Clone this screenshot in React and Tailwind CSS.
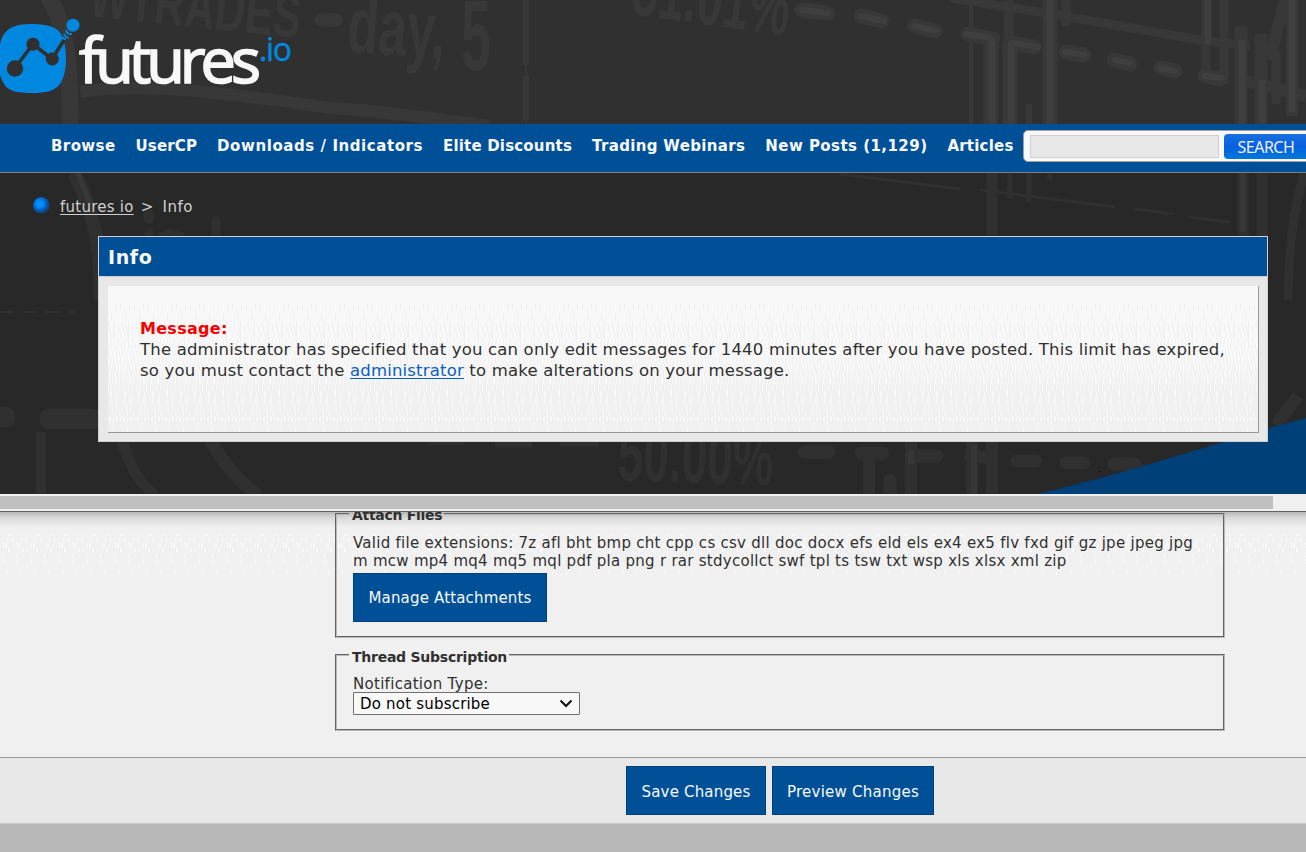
import React from 'react';

const navItems = [
  { label: 'Browse', spacing: 'tracking-[0.4px]' },
  { label: 'UserCP', spacing: 'tracking-[0.15px]' },
  { label: 'Downloads / Indicators', spacing: 'tracking-[0.57px]' },
  { label: 'Elite Discounts', spacing: 'tracking-[0.18px]' },
  { label: 'Trading Webinars', spacing: 'tracking-[0.34px]' },
  { label: 'New Posts (1,129)', spacing: 'tracking-[0.45px]' },
  { label: 'Articles', spacing: 'tracking-[0.2px]' },
];

// Grain rows: [y, height, x positions inside a 14px tile]
const panelDark = [
  [18, 6, [7, 12]],
  [28, 7, [3]],
  [35, 5, [0, 6]],
  [40, 6, [1, 4, 6, 10]],
  [46, 6, [2, 5, 6, 12]],
  [52, 5, [3, 6, 10]],
  [57, 6, [2, 6, 9, 13]],
  [64, 6, [0, 4, 8, 11]],
  [71, 7, [2, 5, 9, 12]],
  [78, 6, [1, 4, 6, 7, 10, 13]],
  [84, 7, [0, 3, 5, 8, 9, 12]],
];
const panelLight = [
  [91, 7, [1, 4, 7, 8, 11]],
  [98, 7, [0, 3, 6, 10]],
  [105, 6, [2, 3, 8]],
  [111, 7, [2, 7, 9]],
  [119, 6, [4, 8]],
  [125, 5, [5, 11]],
  [131, 4, [1, 2, 5, 8, 9, 12]],
  [136, 3, [4]],
  [141, 5, [5]],
];
const formLight = [
  [22, 2, [8, 11]],
  [25, 5, [7, 12]],
  [31, 5, [3, 5, 6]],
  [36, 4, [8, 9]],
  [41, 5, [2]],
  [47, 5, [3]],
  [59, 4, [6]],
];

const grainPath = (rows) =>
  rows.map(([y, h, xs]) => xs.map((x) => `M${x} ${y}h1v${h}h-1z`).join('')).join('');

const Grain = ({ id, rows, color, height }) => (
  <svg className="absolute top-0 left-0 -z-10" width="100%" height={height} aria-hidden="true">
    <defs>
      <pattern id={id} width="14" height={height} patternUnits="userSpaceOnUse">
        <path d={grainPath(rows)} fill={color} />
      </pattern>
    </defs>
    <rect width="100%" height={height} fill={`url(#${id})`} />
  </svg>
);

// Faded chart artwork behind the header and the info panel
const Backdrop = () => (
  <svg className="absolute inset-0 -z-10" width="1306" height="494" viewBox="0 0 1306 494" aria-hidden="true">
    <rect width="1306" height="124" fill="#303030" />
    <rect y="124" width="1306" height="370" fill="#282828" />
    <g fill="#383838" fontFamily="Liberation Sans Narrow, Liberation Sans, sans-serif" fontWeight="bold">
      <text transform="translate(88 16) rotate(6)" fontSize="62" textLength="212" lengthAdjust="spacingAndGlyphs">WTRADES</text>
      <text transform="translate(346 52) rotate(4)" fontSize="80" textLength="98" lengthAdjust="spacingAndGlyphs">day,</text>
      <text transform="translate(461 70)" fontSize="100" textLength="30" lengthAdjust="spacingAndGlyphs">5</text>
      <text transform="translate(630 14) rotate(8)" fontSize="82" textLength="158" lengthAdjust="spacingAndGlyphs">51.01%</text>
    </g>
    <g fill="none" stroke="#383838">
      <path d="M48 -4C64 22 70 50 70 124" strokeWidth="17" />
      <path d="M80 92C140 82 220 92 330 108C400 112 440 120 490 126" strokeWidth="12" />
      <path d="M526 0V65M526 76V120" strokeWidth="6" />
      <path d="M526 60V124" strokeWidth="2" />
      <path d="M321 20H336" strokeWidth="13" strokeLinecap="round" />
      <path d="M950 -2L1040 12L1200 40L1250 46" strokeWidth="9" />
      <path d="M971 0V124" strokeWidth="4" />
      <path d="M1009 0V40M1066 0V26M1206 0V80M1224 0V84" strokeWidth="9" />
      <path d="M1029 104V124" strokeWidth="6" />
      <path d="M991 38V124M1010 42V124M1050 0V124" strokeWidth="15" />
      <path d="M1241 26V124M1261 34V124" strokeWidth="13" />
      <path d="M1276 50V104" strokeWidth="9" />
      <path d="M1286 -5L1270 60M1292 0V116M1240 80L1306 96" strokeWidth="12" />
      <path d="M802 10L828 13M861 16L882 21M915 26L935 31M968 34L993 39M1011 43L1034 47M1066 52L1084 55M1114 60L1130 64M1161 68L1175 71M1205 76L1220 79" strokeWidth="15" strokeLinecap="round" />
    </g>
    <g fill="none" stroke="#3f3f3f">
      <path d="M802 10L828 13M861 16L884 21M914 26L936 31M966 34L990 38M1011 43L1038 47M1065 52L1084 55M1115 60L1130 63M1160 68L1175 71M1205 76L1222 78" strokeWidth="6" strokeLinecap="round" />
      <path d="M992 38V124M1011 44V124M1050 0V124M1208 0V44M1292 0V112M1242 40V124M1262 80V124" strokeWidth="7" />
    </g>
    <g fill="none" stroke="#303030">
      <path d="M74 173C94 210 101 250 101 300" strokeWidth="14" />
      <path d="M149 214V219" strokeWidth="10" strokeLinecap="round" />
      <path d="M149 233V236M216 221V236" strokeWidth="9" strokeLinecap="round" />
      <path d="M158 236L170 232L184 236" strokeWidth="6" />
      <path d="M0 312H75" strokeWidth="2" strokeDasharray="14 9" />
      <path d="M-5 417H5M50 419H92" strokeWidth="21" strokeLinecap="round" />
      <path d="M41 432V494" strokeWidth="10" />
      <path d="M122 441C130 465 138 482 155 496" strokeWidth="11" />
      <path d="M210 440C226 467 238 480 258 496" strokeWidth="13" />
      <path d="M840 174L960 189M980 190L1115 207M1135 209L1173 214M1188 217L1230 222" strokeWidth="3" />
      <path d="M992 173V236M1243 173V236M1262 173V236" strokeWidth="11" />
      <path d="M1010 173V198M1029 173V202M1050 173V180" strokeWidth="5" />
      <path d="M1304 173C1298 200 1290 215 1288 300" strokeWidth="9" />
      <path d="M430 441H464M495 444H532M560 443H598" strokeWidth="7" />
      <path d="M804 452H829M861 453H883M915 456H937M970 457H990M1017 461H1036M1066 463H1084M1114 464H1135" strokeWidth="13" strokeLinecap="round" />
      <path d="M869 458V494M911 442V494M972 442V494M992 442V494" strokeWidth="12" />
      <path d="M890 480V496" strokeWidth="13" strokeLinecap="round" />
      <path d="M1276 425L1298 396" strokeWidth="12" />
      <path d="M974 446V494M911 450V464" stroke="#363636" strokeWidth="6" />
      <path d="M78 173L90 204M1243 173V232" stroke="#383838" strokeWidth="5" />
    </g>
    <text transform="translate(617 480) rotate(2)" fontSize="76" fill="#303030" fontWeight="bold" fontFamily="Liberation Sans Narrow, Liberation Sans, sans-serif" textLength="156" lengthAdjust="spacingAndGlyphs">50.00%</text>
    <path d="M1037 494C1130 473 1210 444 1306 418V494Z" fill="#004078" />
    <rect x="1099" y="471" width="1" height="1" fill="#000" />
  </svg>
);

const Logo = () => (
  <svg width="300" height="124" viewBox="0 0 300 124" role="img" aria-label="futures.io">
    <path d="M31 24C52 24 59 29 62 36C65 43 66 50 66 59C66 67 65 76 60 84C55 91 46 93 32 93C17 93 8 91 4 84C-1 76 -1 67 -1 59C-1 48 0 40 4 34C9 27 17 24 31 24Z" fill="#0088e0" />
    <path d="M15 68L33 44L52 59L66 37" fill="none" stroke="#303030" strokeWidth="3.6" />
    <circle cx="15" cy="68.5" r="8.2" fill="#303030" />
    <circle cx="33" cy="44.2" r="6.5" fill="#303030" />
    <circle cx="52.3" cy="59" r="6.5" fill="#303030" />
    <circle cx="73" cy="25.2" r="6.5" fill="#0088e0" />
    <path d="M66 30Q67 35 72 34M64 33.5Q65 38 69 37.5M62.5 37Q63.5 39 66 39.5" fill="none" stroke="#0088e0" strokeWidth="1.8" />
    <text x="79" y="83" fontSize="63" fill="#f8f8f8" stroke="#f8f8f8" strokeWidth="1.7" fontFamily="Open Sans, Noto Sans, sans-serif" textLength="182" lengthAdjust="spacing">futures</text>
    <text x="259" y="61" fontSize="32" fill="#0088e0" stroke="#0088e0" strokeWidth="0.4" fontFamily="Open Sans, Noto Sans, sans-serif" textLength="33" lengthAdjust="spacing">.io</text>
  </svg>
);

const BlueButton = ({ children, className }) => (
  <button type="button" className={`h-[49px] border border-[#004078] bg-[#005098] text-[15px] text-[#f8f8f8] whitespace-nowrap ${className}`}>
    {children}
  </button>
);

const TopWindow = () => (
  <div className="relative isolate h-[494px] overflow-hidden">
    <Backdrop />
    <header className="h-[124px]">
      <Logo />
    </header>

    <nav className="flex h-[49px] w-[1340px] border-b border-[#808080] bg-[#005098] pl-[51px]">
      <ul className="flex gap-5 pt-[12px] text-[15px] leading-[21px] font-bold whitespace-nowrap text-[#f8f8f8]">
        {navItems.map(({ label, spacing }) => (
          <li key={label} className={spacing}>{label}</li>
        ))}
      </ul>
      <div className="mt-[6px] ml-[9px] flex h-[32px] w-[300px] shrink-0 items-center rounded-[5px] border border-[#a0a0a0] bg-[#f8f8f8] pl-[6px]">
        <div className="h-[23px] w-[189px] border border-[#d0d0d0] bg-[#e8e8e8]" />
        <button type="button" className="ml-[5px] h-[25px] w-[90px] rounded-[4px] bg-linear-to-b from-[#1870e0] via-[#0860e0] to-[#0078d8] pt-px pl-[14px] text-left font-['Noto_Sans',sans-serif] text-[16px] leading-[25px] tracking-[-0.5px] text-[#f0f0f0]">
          SEARCH
        </button>
      </div>
    </nav>

    <div className="flex h-[63px] items-start pt-[23px] text-[15px] leading-[23px] tracking-[0.25px] text-[#d0d0d0]">
      <span className="mt-px ml-[33px] h-[17px] w-[17px] rounded-full bg-radial-[at_40%_40%] from-[#0090ff] from-20% via-[#0060c0] via-45% to-[#282828] to-80%" />
      <a href="#" className="ml-[10px] underline underline-offset-2">futures io</a>
      <span className="ml-[7px]">&gt;</span>
      <span className="ml-[9px] tracking-[0.5px]">Info</span>
    </div>

    <section className="ml-[98px] h-[206px] w-[1170px] border border-[#d0d0d0] bg-[#e8e8e8]">
      <h1 className="h-[40px] border-b border-[#d0d0d0] bg-[#005098] pl-[9px] text-[19px] leading-[41px] font-bold tracking-[0.6px] text-[#f8f8f8]">Info</h1>
      <div className="relative isolate mt-[9px] ml-[9px] h-[147px] w-[1151px] border-r border-b border-[#989898] bg-linear-to-b from-[#f8f8f8] from-62% to-[#f0f0f0] to-62% pt-[32px] pl-[32px] text-[16.5px] leading-[21px] tracking-[0.18px] whitespace-nowrap text-[#303030]">
        <Grain id="grain-panel-dark" rows={panelDark} color="#f0f0f0" height="146" />
        <Grain id="grain-panel-light" rows={panelLight} color="#f8f8f8" height="146" />
        <p className="text-[16px] font-bold tracking-[0.3px] text-[#f80000]">Message:</p>
        <p>The administrator has specified that you can only edit messages for 1440 minutes after you have posted. This limit has expired,</p>
        <p>
          so you must contact the <a href="#" className="text-[#0860c0] underline underline-offset-2">administrator</a> to make alterations on your message.
        </p>
      </div>
    </section>
  </div>
);

const Scrollbar = () => (
  <div className="h-[18px] border-b border-[#606060] bg-[#f0f0f0] pt-[2px]">
    <div className="h-[13px] w-[1273px] bg-[#c0c0c0]" />
  </div>
);

const EditForm = () => (
  <form className="relative isolate h-[340px] overflow-hidden">
    <Grain id="grain-form" rows={formLight} color="#f8f8f8" height="66" />
    <div className="absolute inset-x-0 top-0 -z-10 h-[15px] bg-linear-to-b from-[#b8b8b8] via-[#dadada] via-40% to-[#f0f0f0]" />
    <div className="-mt-[6px] h-[251px] pl-[335px]">
      <fieldset className="h-[132px] w-[890px] border-2 border-[#b8b8b8] px-4 text-[15px] leading-[18px] tracking-[0.27px] whitespace-nowrap text-[#303030] [border-style:groove]">
        <legend className="-ml-[4px] h-[16px] pr-[2px] pl-[3px] text-[14px] font-bold tracking-[-0.3px]">Attach Files</legend>
        <p className="pt-[12px]">Valid file extensions: 7z afl bht bmp cht cpp cs csv dll doc docx efs eld els ex4 ex5 flv fxd gif gz jpe jpeg jpg</p>
        <p>m mcw mp4 mq4 mq5 mql pdf pla png r rar stdycollct swf tpl ts tsw txt wsp xls xlsx xml zip</p>
        <BlueButton className="mt-[3px] w-[194px] tracking-[0.16px]">Manage Attachments</BlueButton>
      </fieldset>

      <fieldset className="mt-[9px] h-[84px] w-[890px] border-2 border-[#b8b8b8] px-4 text-[15px] leading-[18px] tracking-[0.29px] whitespace-nowrap text-[#303030] [border-style:groove]">
        <legend className="-ml-[4px] h-[16px] pr-[2px] pl-[3px] text-[14px] leading-[20px] font-bold tracking-[-0.25px]">Thread Subscription</legend>
        <p className="pt-[12px]">Notification Type:</p>
        <div className="-mt-px flex h-[23px] w-[227px] items-center justify-between rounded-[1px] border border-[#707070] bg-[#f8f8f8] pr-[6px] pl-[6px] tracking-[0.2px] text-black">
          <span>Do not subscribe</span>
          <svg width="14" height="9" viewBox="0 0 14 9" fill="none" stroke="#101010" strokeWidth="2">
            <path d="M1.5 1.5L7 7L12.5 1.5" />
          </svg>
        </div>
      </fieldset>
    </div>
    <div className="flex h-[67px] gap-[6px] border-t border-b border-t-[#989898] border-b-[#c8c8c8] bg-[#e8e8e8] pt-[8px] pl-[626px]">
      <BlueButton className="w-[140px] pt-[3px] tracking-[0.18px]">Save Changes</BlueButton>
      <BlueButton className="w-[162px] pt-[3px] tracking-[0.25px]">Preview Changes</BlueButton>
    </div>
    <div className="h-[28px] bg-[#b8b8b8]" />
  </form>
);

const App = () => {
  return (
    <div className="h-[852px] w-[1306px] overflow-hidden bg-[#f0f0f0] font-['Verdana','DejaVu_Sans',sans-serif]">
      <TopWindow />
      <Scrollbar />
      <EditForm />
    </div>
  );
};

export default App;
